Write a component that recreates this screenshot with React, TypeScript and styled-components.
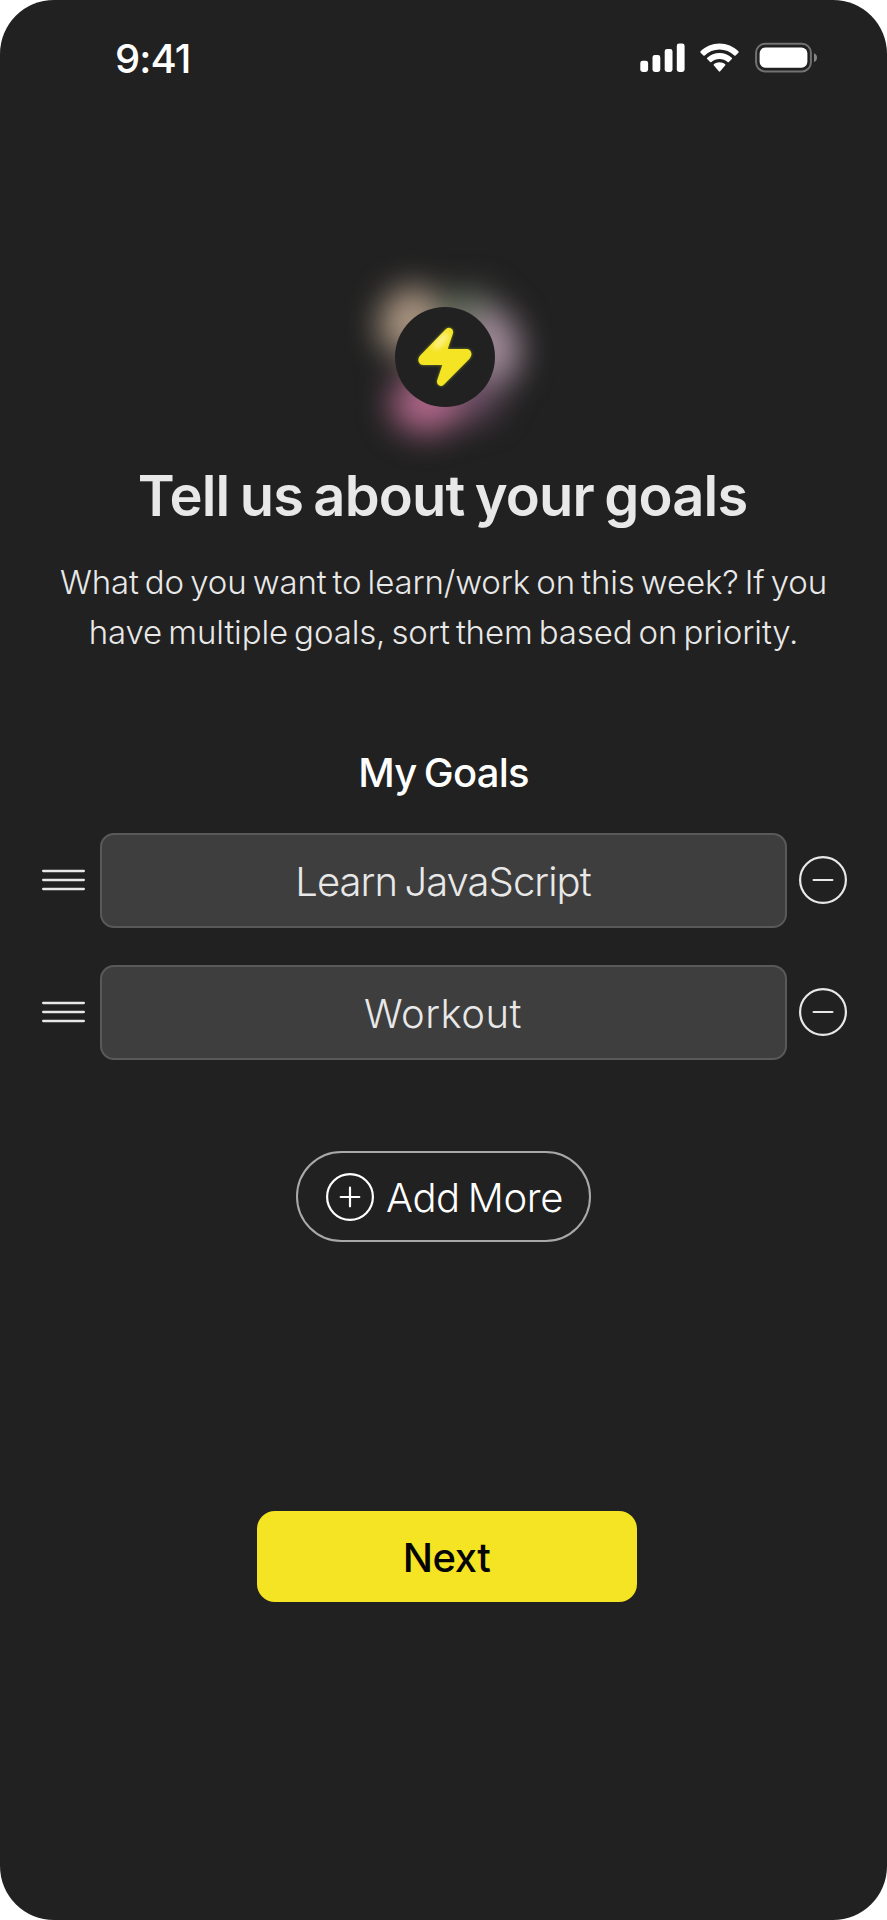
import React from "react";
import styled, { createGlobalStyle } from "styled-components";

const GlobalStyle = createGlobalStyle`
  html, body { margin: 0; padding: 0; background: #ffffff; }
  * { box-sizing: border-box; }
  button { font: inherit; color: inherit; background: none; border: 0; padding: 0; margin: 0; }
`;

const Screen = styled.main`
  width: 887px;
  height: 1920px;
  border-radius: 54px;
  background: #212121;
  color: #e8e8e8;
  font-family: Inter, "Open Sans", sans-serif;
  display: flex;
  flex-direction: column;
  align-items: center;
  overflow: hidden;
`;

const StatusBar = styled.header`
  width: 100%;
  height: 117px;
  padding: 0 70px 0 115px;
  display: flex;
  align-items: center;
  justify-content: space-between;
  flex: none;
`;

const Time = styled.time`
  font-size: 40px;
  font-weight: 500;
  line-height: 50px;
  letter-spacing: -0.9px;
  color: #ffffff;
`;

const StatusIcons = styled.svg`
  display: block;
  margin-bottom: 2px;
`;

const Hero = styled.div`
  position: relative;
  width: 100px;
  height: 100px;
  margin: 190px 0 0 3px;
  flex: none;
`;

const HeroArt = styled.svg`
  position: absolute;
  left: -80px;
  top: -80px;
`;

const Title = styled.h1`
  margin: 54px 2px 0 0;
  font-size: 56px;
  font-weight: 600;
  line-height: 70px;
  letter-spacing: -0.83px;
  word-spacing: -3px;
  white-space: nowrap;
`;

const Intro = styled.p`
  margin: 26px 0 0;
  font-size: 33px;
  font-weight: 320;
  line-height: 50px;
  letter-spacing: -0.13px;
  word-spacing: -3px;
  text-align: center;
  white-space: nowrap;
`;

const SectionTitle = styled.h2`
  margin: 91px 0 0;
  font-size: 40px;
  font-weight: 500;
  line-height: 50px;
  letter-spacing: -0.75px;
  word-spacing: -2.5px;
  color: #ffffff;
`;

const GoalList = styled.ul`
  list-style: none;
  width: 100%;
  margin: 35px 0 0;
  padding: 0 40px 0 42px;
  display: flex;
  flex-direction: column;
  gap: 37px;
`;

const GoalRow = styled.li`
  display: flex;
  align-items: center;
`;

const DragHandle = styled.button`
  width: 43px;
  margin: 0 15px 1px 0;
  svg { display: block; }
`;

const GoalField = styled.div<{ $tracking: number }>`
  flex: 1;
  height: 95px;
  padding: 1px 1px 0 0;
  border: 2px solid #595959;
  border-radius: 14px;
  background: #3e3e3e;
  display: flex;
  align-items: center;
  justify-content: center;
  font-size: 40px;
  font-weight: 300;
  letter-spacing: ${(p) => p.$tracking}px;
  word-spacing: -3px;
`;

const RemoveButton = styled.button`
  width: 48px;
  height: 48px;
  margin: 0 0 1px 12px;
  svg { display: block; }
`;

const AddButton = styled.button`
  width: 295px;
  height: 91px;
  margin: 91px 0 0;
  padding: 0 24px 0 28px;
  border: 2px solid #a9a9a9;
  border-radius: 46px;
  display: flex;
  align-items: center;
  gap: 12px;
  color: #ffffff;
  font-size: 40px;
  font-weight: 320;
  letter-spacing: -0.35px;
  word-spacing: -3px;
  white-space: nowrap;
  svg { display: block; flex: none; }
  span { padding-top: 1px; }
`;

const NextButton = styled.button`
  width: 380px;
  height: 91px;
  margin: 268.5px 0 0 7px;
  padding: 3px 0 0;
  border-radius: 18px;
  background: #f5e424;
  color: #050505;
  font-size: 40px;
  font-weight: 550;
  letter-spacing: -0.5px;
  text-indent: -1px;
`;

function StatusGlyphs() {
  return (
    <StatusIcons width="179" height="32" viewBox="0 0 179 32" fill="none">
      <g fill="#fff">
        <rect x="2.3" y="18.7" width="7.8" height="11.3" rx="2.4" />
        <rect x="14.5" y="13" width="7.8" height="17" rx="2.4" />
        <rect x="26.7" y="7" width="7.8" height="23" rx="2.4" />
        <rect x="38.8" y="1.6" width="7.8" height="28.4" rx="2.4" />
        <path d="M81.500 7.600 C87.200 7.600 92.400 9.800 96.300 13.500 Q97 14.100 97.600 13.500 L100.400 10.700 Q101.100 10 100.400 9.300 C95.400 4.500 88.700 1.600 81.500 1.600 C74.300 1.600 67.600 4.500 62.600 9.300 Q61.900 10 62.600 10.700 L65.400 13.500 Q66 14.100 66.700 13.500 C70.600 9.800 75.800 7.600 81.500 7.600Z" />
        <path d="M81.500 16.900 C84.600 16.900 87.400 18 89.600 20 Q90.300 20.600 90.900 20 L93.800 17.100 Q94.500 16.400 93.700 15.700 C90.500 12.700 86.200 11 81.500 11 C76.800 11 72.500 12.700 69.300 15.700 Q68.500 16.400 69.200 17.100 L72.100 20 Q72.700 20.600 73.400 20 C75.600 18 78.400 16.900 81.500 16.900Z" />
        <path d="M87.100 23.500 Q87.900 22.800 87.100 22.200 C85.500 21 83.600 20.300 81.500 20.300 C79.400 20.300 77.500 21 75.900 22.200 Q75.100 22.800 75.900 23.500 L80.800 29.300 Q81.500 30 82.200 29.300Z" />
        <rect x="121.600" y="5.400" width="47.800" height="20.300" rx="6" />
      </g>
      <rect x="118.100" y="1.700" width="54.800" height="27.700" rx="9" stroke="#727272" strokeWidth="2" />
      <path d="M176 11.200 C178.200 12.100 179 13.700 179 15.600 C179 17.500 178.200 19.300 176 20.200Z" fill="#858585" />
    </StatusIcons>
  );
}

function BoltBadge() {
  return (
    <Hero>
      <HeroArt width="260" height="260" viewBox="-80 -80 260 260">
        <defs>
          <filter id="glow" filterUnits="userSpaceOnUse" x="-80" y="-80" width="260" height="260" colorInterpolationFilters="sRGB">
            <feGaussianBlur stdDeviation="16.500" />
          </filter>
          <filter id="halo" x="-30%" y="-30%" width="160%" height="160%">
            <feGaussianBlur stdDeviation="1.6" />
          </filter>
          <filter id="shine" x="-60%" y="-60%" width="220%" height="220%">
            <feGaussianBlur stdDeviation="2.4" />
          </filter>
          <clipPath id="boltClip">
            <path d="M50.700 22.200 Q54.300 19.200 57.200 22.300 Q58.500 24 57.900 26.600 L52.700 42 L71.500 42 Q75.200 42 76.300 46 Q77 49 74.500 51.700 L49 77.500 Q45.800 80.500 43 77.600 Q41.600 75.700 42.200 73.200 L47.300 58 L28.500 58 Q24.800 58 23.600 54.500 Q22.700 51.300 25 48.700Z" />
          </clipPath>
        </defs>
        <g filter="url(#glow)">
          <circle cx="50" cy="48" r="46" fill="#3c3a36" />
          <ellipse cx="14" cy="13" rx="28" ry="35" transform="rotate(30 14 13)" fill="#b09a86" />
          <ellipse cx="73" cy="9" rx="29" ry="26" fill="#626d5c" />
          <ellipse cx="98" cy="40" rx="27" ry="39" transform="rotate(-8 98 40)" fill="#a48d9d" />
          <ellipse cx="73" cy="90" rx="32" ry="24" fill="#694d63" />
          <ellipse cx="31" cy="97" rx="35" ry="29" fill="#b2688b" />
        </g>
        <circle cx="50" cy="50" r="50" fill="#212121" />
        <path filter="url(#halo)" opacity=".55" fill="#bcdc25" d="M50.700 22.200 Q54.300 19.200 57.200 22.300 Q58.500 24 57.900 26.600 L52.700 42 L71.500 42 Q75.200 42 76.300 46 Q77 49 74.500 51.700 L49 77.500 Q45.800 80.500 43 77.600 Q41.600 75.700 42.200 73.200 L47.300 58 L28.500 58 Q24.800 58 23.600 54.500 Q22.700 51.300 25 48.700Z" />
        <g clipPath="url(#boltClip)">
          <rect x="20" y="15" width="60" height="70" fill="#f5e424" />
          <ellipse cx="46" cy="34" rx="11" ry="4" transform="rotate(-47 46 34)" fill="#fff4a0" opacity=".8" filter="url(#shine)" />
        </g>
      </HeroArt>
    </Hero>
  );
}

function CircleIcon({ plus, color }: { plus?: boolean; color: string }) {
  return (
    <svg width="48" height="48" viewBox="0 0 48 48" fill="none" stroke={color} strokeWidth="2.2" strokeLinecap="round">
      <circle cx="24" cy="24" r="22.900" />
      <path d={plus ? "M14.700 24H33.300M24 14.700V33.300" : "M14.600 24H33.400"} />
    </svg>
  );
}

const goals = [
  { name: "Learn JavaScript", tracking: -0.93 },
  { name: "Workout", tracking: 0.5 },
];

export default function App() {
  return (
    <>
      <GlobalStyle />
      <Screen>
        <StatusBar>
          <Time>9:41</Time>
          <StatusGlyphs />
        </StatusBar>
        <BoltBadge />
        <Title>Tell us about your goals</Title>
        <Intro>
          What do you want to learn/work on this week? If you
          <br />
          have multiple goals, sort them based on priority.
        </Intro>
        <SectionTitle>My Goals</SectionTitle>
        <GoalList>
          {goals.map((goal) => (
            <GoalRow key={goal.name}>
              <DragHandle aria-label="Reorder">
                <svg width="43" height="22" viewBox="0 0 43 22" stroke="#e8e8e8" strokeWidth="2.300" strokeLinecap="round">
                  <path d="M1.150 2H41.850M1.150 11H41.850M1.150 20H41.850" />
                </svg>
              </DragHandle>
              <GoalField $tracking={goal.tracking}>{goal.name}</GoalField>
              <RemoveButton aria-label="Remove">
                <CircleIcon color="#e8e8e8" />
              </RemoveButton>
            </GoalRow>
          ))}
        </GoalList>
        <AddButton>
          <CircleIcon plus color="#ffffff" />
          <span>Add More</span>
        </AddButton>
        <NextButton>Next</NextButton>
      </Screen>
    </>
  );
}
